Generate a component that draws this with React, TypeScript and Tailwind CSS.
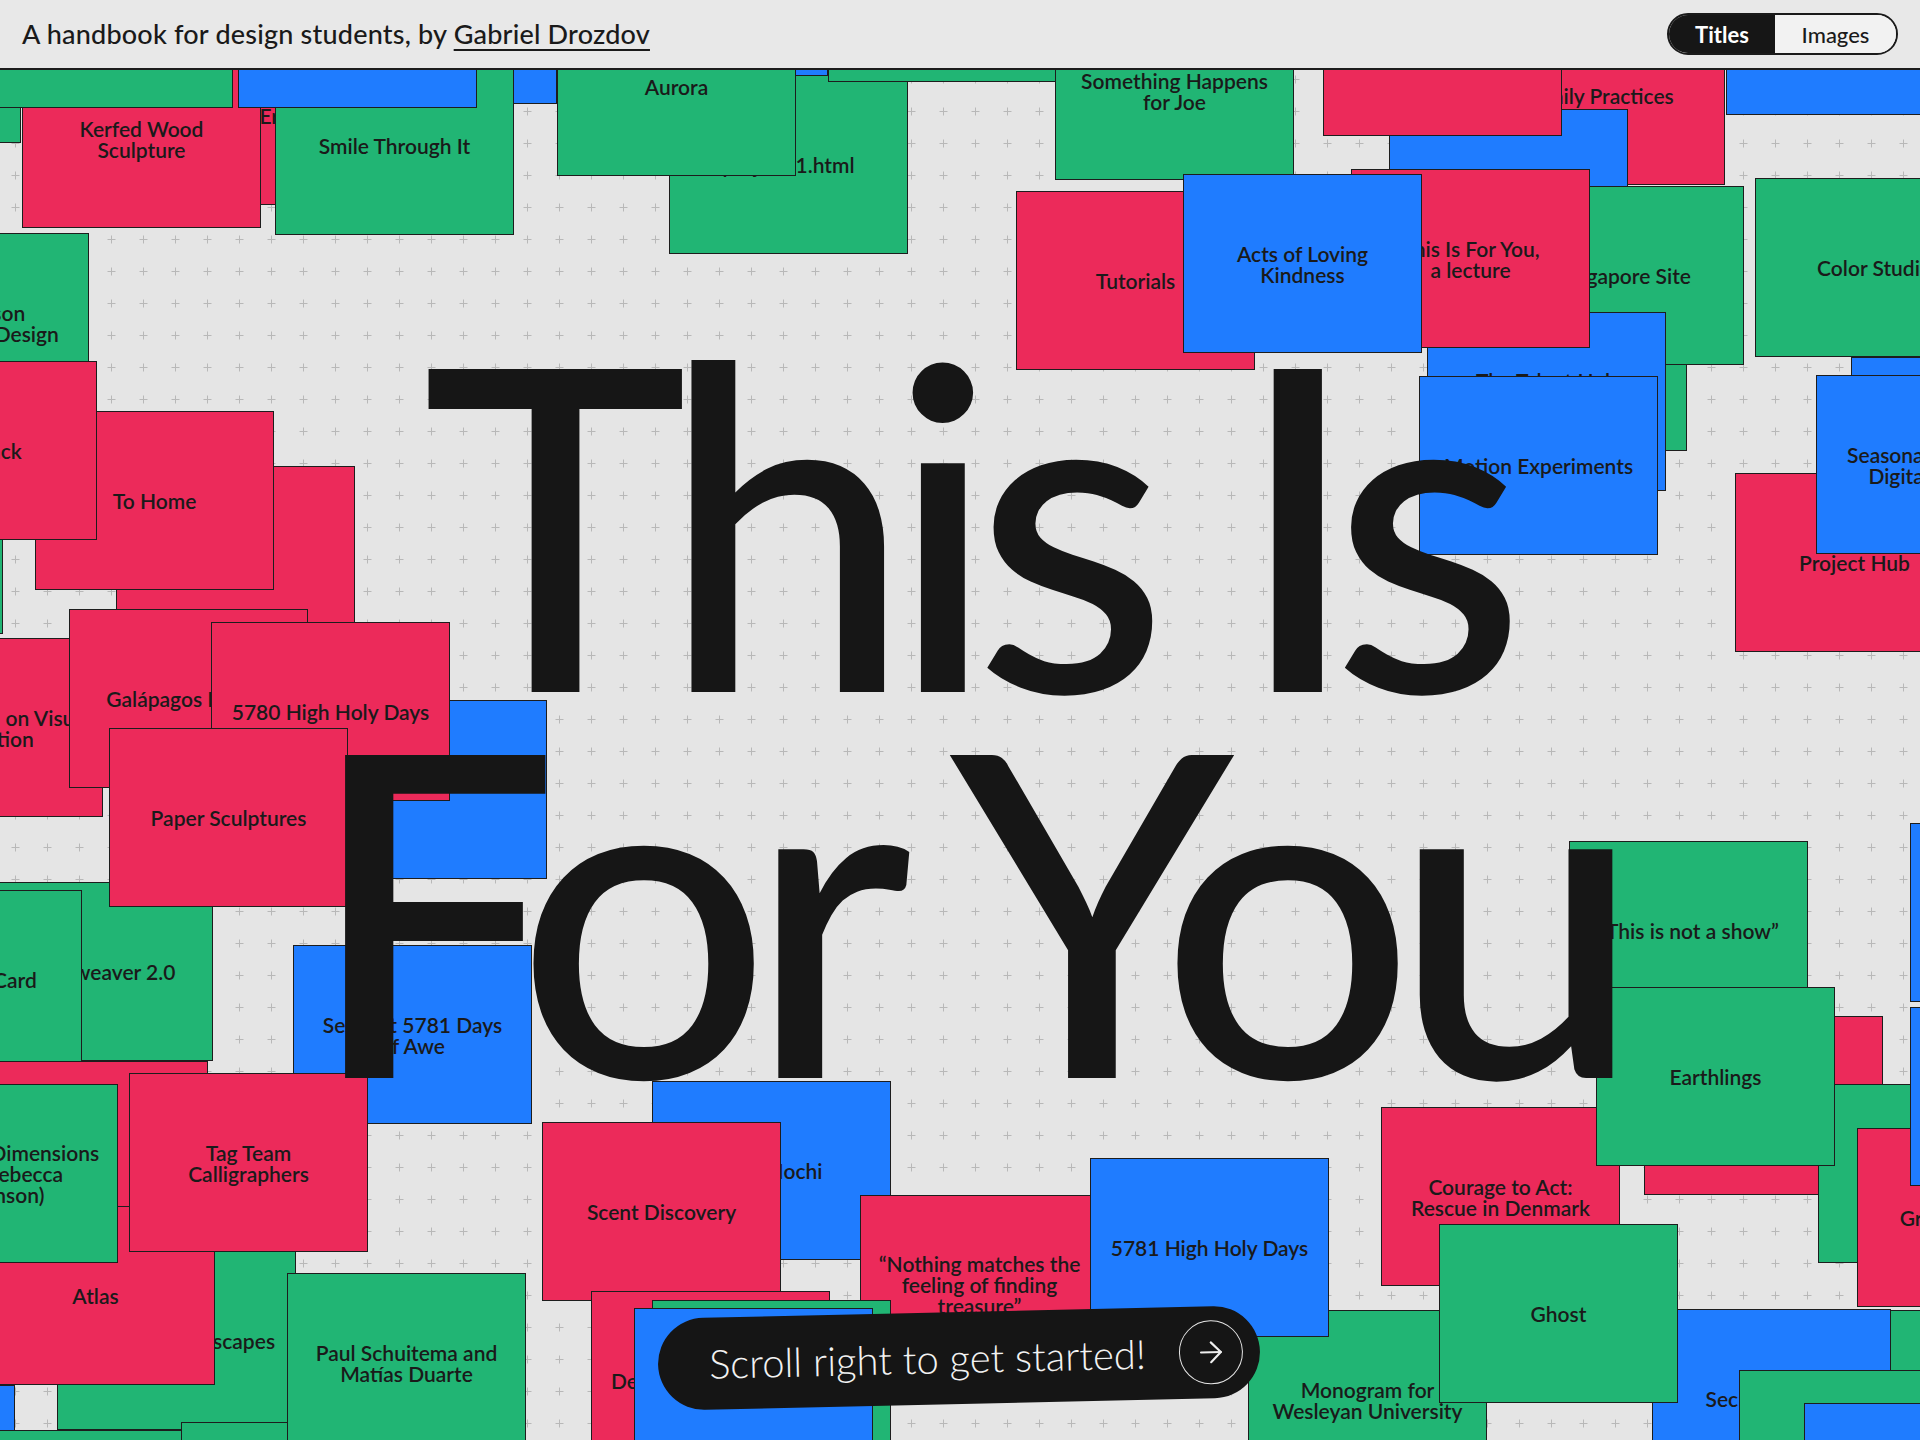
import { ArrowRight } from "lucide-react";

type Tone = "red" | "green" | "blue";
type Card = { x: number; y: number; tone: Tone; label?: string };

const toneClass: Record<Tone, string> = {
  red: "bg-[#ec2a5a]",
  green: "bg-[#21b574]",
  blue: "bg-[#1f7cff]",
};

// page coordinates, listed bottom to top
const cards: Card[] = [
  // top left
  { x: -218, y: -36, tone: "green" },
  { x: 211, y: 26, tone: "red", label: "Error Messages" },
  { x: 22, y: 49, tone: "red", label: "Kerfed Wood\nSculpture" },
  { x: 318, y: -75, tone: "blue" },
  { x: 275, y: 56, tone: "green", label: "Smile Through It" },
  { x: -6, y: -71, tone: "green" },
  { x: 238, y: -71, tone: "blue" },
  { x: 589, y: -103, tone: "blue" },
  { x: 669, y: 75, tone: "green", label: "project-1.html" },
  { x: 828, y: -97, tone: "green" },
  { x: 557, y: -3, tone: "green", label: "Aurora" },
  { x: 1055, y: 1, tone: "green", label: "Something Happens\nfor Joe" },
  // top right
  { x: 1486, y: 6, tone: "red", label: "Daily Practices" },
  { x: 1389, y: 109, tone: "blue" },
  { x: 1323, y: -43, tone: "red" },
  { x: 1726, y: -64, tone: "blue" },
  { x: 1448, y: 272, tone: "green" },
  { x: 1505, y: 186, tone: "green", label: "Singapore Site" },
  { x: 1427, y: 312, tone: "blue", label: "The Talent Hub\nWebsite\nRedesign" },
  { x: 1351, y: 169, tone: "red", label: "This Is For You,\na lecture" },
  { x: 1016, y: 191, tone: "red", label: "Tutorials" },
  { x: 1183, y: 174, tone: "blue", label: "Acts of Loving\nKindness" },
  { x: 1419, y: 376, tone: "blue", label: "Motion Experiments" },
  { x: 1755, y: 178, tone: "green", label: "Color Studio" },
  { x: 1851, y: 357, tone: "blue" },
  { x: 1735, y: 473, tone: "red", label: "Project Hub" },
  { x: 1816, y: 375, tone: "blue", label: "Seasonal Greetings\nDigital Collage" },
  // left
  { x: -150, y: 233, tone: "green", label: "Comparison\nInformation Design" },
  { x: -236, y: 455, tone: "green" },
  { x: 116, y: 466, tone: "red", label: "Toolbox" },
  { x: 35, y: 411, tone: "red", label: "To Home" },
  { x: -142, y: 361, tone: "red", label: "Feedback" },
  { x: -136, y: 638, tone: "red", label: "Conversation on Visual\nPerception" },
  { x: 69, y: 609, tone: "red", label: "Galápagos Islands" },
  { x: 308, y: 700, tone: "blue" },
  { x: 211, y: 622, tone: "red", label: "5780 High Holy Days" },
  { x: -26, y: 882, tone: "green", label: "Dreamweaver 2.0" },
  { x: -157, y: 890, tone: "green", label: "Interactive Card" },
  { x: 109, y: 728, tone: "red", label: "Paper Sculptures" },
  { x: 293, y: 945, tone: "blue", label: "Selichot 5781 Days\nof Awe" },
  { x: -31, y: 1061, tone: "red" },
  { x: 57, y: 1251, tone: "green", label: "Imagined Landscapes" },
  { x: -224, y: 1385, tone: "blue" },
  { x: -24, y: 1206, tone: "red", label: "Atlas" },
  { x: -121, y: 1084, tone: "green", label: "Exploring Dimensions\n(with Rebecca\nRobinson)" },
  { x: 129, y: 1073, tone: "red", label: "Tag Team\nCalligraphers" },
  { x: -55, y: 1430, tone: "green" },
  { x: 181, y: 1422, tone: "green" },
  { x: 287, y: 1273, tone: "green", label: "Paul Schuitema and\nMatías Duarte" },
  // bottom middle
  { x: 652, y: 1081, tone: "blue", label: "Ube Mochi" },
  { x: 860, y: 1195, tone: "red", label: "“Nothing matches the\nfeeling of finding\ntreasure”" },
  { x: 542, y: 1122, tone: "red", label: "Scent Discovery" },
  { x: 591, y: 1291, tone: "red", label: "Design Fundamentals" },
  { x: 652, y: 1300, tone: "green" },
  { x: 634, y: 1308, tone: "blue", label: "Sukkot Booth" },
  { x: 1248, y: 1310, tone: "green", label: "Monogram for\nWesleyan University" },
  { x: 1090, y: 1158, tone: "blue", label: "5781 High Holy Days" },
  // right
  { x: 1569, y: 841, tone: "green", label: "“This is not a show”" },
  { x: 1644, y: 1016, tone: "red" },
  { x: 1381, y: 1107, tone: "red", label: "Courage to Act:\nRescue in Denmark" },
  { x: 1818, y: 1084, tone: "green" },
  { x: 1596, y: 987, tone: "green", label: "Earthlings" },
  { x: 1857, y: 1128, tone: "red", label: "Graphic Systems" },
  { x: 1910, y: 823, tone: "blue" },
  { x: 1910, y: 1007, tone: "blue" },
  { x: 1823, y: 1310, tone: "green", label: "Graduate Show" },
  { x: 1652, y: 1309, tone: "blue", label: "Secret Garden" },
  { x: 1439, y: 1224, tone: "green", label: "Ghost" },
  { x: 1739, y: 1370, tone: "green" },
  { x: 1804, y: 1403, tone: "blue" },
];

const HEADER = 70;

function Tile({ x, y, tone, label }: Card) {
  return (
    <div
      className={`absolute flex h-[179px] w-[239px] items-center justify-center border-[1.5px] border-[#1d1d1d] px-2 text-center ${toneClass[tone]}`}
      style={{ left: x, top: y - HEADER }}
    >
      {label ? (
        <p className="whitespace-pre text-[21px] font-semibold leading-[21px] text-[#1a1a1a]">
          {label}
        </p>
      ) : null}
    </div>
  );
}

const App = () => {
  return (
    <div className="h-[1440px] w-[1920px] overflow-hidden bg-[#e5e5e5] font-['Lato',sans-serif] text-[#1a1a1a]">
      <header className="flex h-[70px] items-center justify-between border-b-2 border-[#1c1c1c] bg-[#e8e8e8] px-[22px]">
        <p className="text-[27px] font-medium tracking-[0.2px]">
          A handbook for design students, by{" "}
          <a className="underline decoration-2 underline-offset-[5px]">Gabriel Drozdov</a>
        </p>
        <div className="flex h-[42px] w-[231px] overflow-hidden rounded-full border-2 border-[#1a1a1a] text-[22px]">
          <span className="flex w-[106px] items-center justify-center bg-[#161616] font-bold text-white">
            Titles
          </span>
          <span className="flex flex-1 items-center justify-center bg-[#f2f2f2] font-medium">
            Images
          </span>
        </div>
      </header>

      <main className="relative h-[1370px] overflow-hidden">
        <svg className="absolute inset-0" width="1920" height="1370">
          <defs>
            <pattern id="plus" width="32" height="32" patternUnits="userSpaceOnUse">
              <path d="M15.5 5.5V13.5M11.5 9.5H19.5" stroke="#b8b8b8" strokeWidth="1" />
            </pattern>
          </defs>
          <rect width="1920" height="1370" fill="url(#plus)" />
        </svg>

        {cards.map((card, i) => (
          <Tile key={i} {...card} />
        ))}

        <div className="pointer-events-none absolute left-[4px] right-0 top-[255px] flex flex-col items-center text-[450px] font-medium leading-[386px] tracking-[-0.054em] text-[#161616]">
          <div>This Is</div>
          <div>For You</div>
        </div>

        <div className="absolute left-[658px] top-[1242px] flex h-[92px] w-[602px] rotate-[-1.3deg] items-center justify-between rounded-full bg-[#151515] pl-[51px] pr-[17px]">
          <span className="text-[40px] font-light text-[#f2f2f2]">Scroll right to get started!</span>
          <span className="flex h-[64px] w-[64px] items-center justify-center rounded-full border-[1.5px] border-[#e6e6e6]">
            <ArrowRight size={34} strokeWidth={1.5} color="#eeeeee" />
          </span>
        </div>
      </main>
    </div>
  );
};

export default App;
